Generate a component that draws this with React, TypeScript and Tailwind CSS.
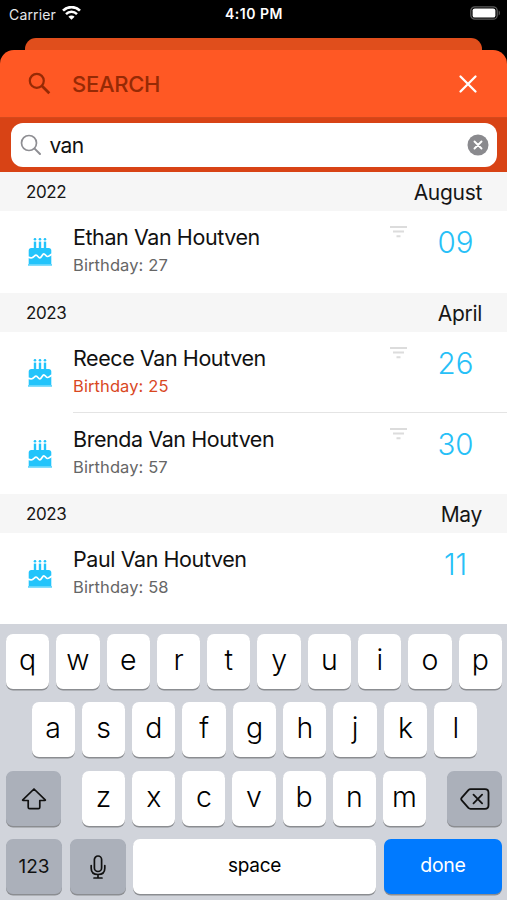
import type { ReactNode } from 'react';

interface Entry {
  name: string;
  age: number;
  day: string;
  highlight?: boolean;
  filter?: boolean;
}

interface Section {
  year: string;
  month: string;
  entries: Entry[];
}

const sections: Section[] = [
  {
    year: '2022',
    month: 'August',
    entries: [{ name: 'Ethan Van Houtven', age: 27, day: '09', filter: true }],
  },
  {
    year: '2023',
    month: 'April',
    entries: [
      {
        name: 'Reece Van Houtven',
        age: 25,
        day: '26',
        highlight: true,
        filter: true,
      },
      { name: 'Brenda Van Houtven', age: 57, day: '30', filter: true },
    ],
  },
  {
    year: '2023',
    month: 'May',
    entries: [{ name: 'Paul Van Houtven', age: 58, day: '11' }],
  },
];

function StatusBar() {
  return (
    <div className="grid grid-cols-3 items-center h-[28px] pl-[9px] pr-[6px] text-white">
      <div className="flex items-center gap-[6px]">
        <span className="text-[14px] tracking-[0.15px] text-gray-200">
          Carrier
        </span>
        <svg className="-mt-[2px]" width="19" height="14" viewBox="0 0 19 14" fill="none">
          <path d="M1 4.6a12.2 12.2 0 0 1 17 0" stroke="white" strokeWidth="2.7" />
          <path d="M4 8.1a7.9 7.9 0 0 1 11 0" stroke="white" strokeWidth="2.5" />
          <path d="M9.5 13.8 6.4 10.7a4.4 4.4 0 0 1 6.2 0z" fill="white" />
        </svg>
      </div>
      <div className="-ml-[2px] -mt-[1px] text-center text-[14px] font-semibold tracking-[0.5px]">
        4:10 PM
      </div>
      <svg
        className="justify-self-end -mt-[2px]"
        width="31"
        height="14"
        viewBox="0 0 31 14"
      >
        <rect x="0.8" y="0.8" width="26.4" height="12.4" rx="4" fill="none" stroke="#5c5c5c" strokeWidth="1.3" />
        <rect x="2.6" y="2.4" width="22.8" height="9.2" rx="2.2" fill="white" />
        <path d="M28.7 4.6c1.6.6 1.6 4.2 0 4.8z" fill="#5c5c5c" />
      </svg>
    </div>
  );
}

function CakeIcon() {
  return (
    <svg width="24" height="30" viewBox="0 0 24 30" fill="#23c4fb">
      {[7, 12, 17].map((x) => (
        <g key={x}>
          <circle cx={x} cy="2.3" r="1.3" />
          <rect x={x - 1.2} y="4.6" width="2.4" height="7" />
        </g>
      ))}
      <path d="M3.2 11h17.6c1.5 0 2.5 1 2.5 2.4V27H.7V13.4C.7 12 1.7 11 3.2 11z" />
      <path
        d="M0 20c1.800.8 3.200 1.200 4.600.4 1.500-.9 2.400-2.400 3.600-2.200 1.400.2 2.200 2.600 3.600 2.600 1.600 0 2.600-4 4-4 1.300 0 2 2.600 3.400 2.700 1.500.1 2.700-1.300 4.800-2.500"
        fill="none"
        stroke="white"
        strokeWidth="1.7"
      />
      <rect x="0" y="27" width="24" height="1.8" opacity="0.7" />
    </svg>
  );
}

function FilterIcon() {
  return (
    <svg width="17" height="13" viewBox="0 0 17 13" stroke="#dcdcdc" strokeWidth="2">
      <path d="M0 2h17M3 6.5h11M6.500 11.200h4" />
    </svg>
  );
}

function SectionHeader(props: { year: string; month: string }) {
  return (
    <div className="flex shrink-0 items-center justify-between h-[39px] pt-[2px] pl-[26px] pr-[25px] bg-[#f6f6f6] text-[#161616]">
      <span className="text-[17px] tracking-[-0.4px]">{props.year}</span>
      <span className="text-[21px] tracking-[-0.3px]">{props.month}</span>
    </div>
  );
}

function Row(props: { entry: Entry; divider: boolean }) {
  const { entry, divider } = props;
  return (
    <div className="flex h-[81px] pl-[28px]">
      <div className="w-[45px] pt-[26px]">
        <CakeIcon />
      </div>
      <div
        className={`flex flex-1 ${divider ? 'border-b border-[#e4e4e4]' : ''}`}
      >
        <div className="flex-1 pt-[12px]">
          <div className="text-[21.5px] leading-[28px] tracking-[-0.42px] text-[#111]">
            {entry.name}
          </div>
          <div
            className={`text-[16.5px] leading-[28px] tracking-[0.1px] ${
              entry.highlight ? 'text-[#d9481f]' : 'text-[#666]'
            }`}
          >
            Birthday: {entry.age}
          </div>
        </div>
        <div className="w-[17px] pt-[14px]">{entry.filter && <FilterIcon />}</div>
        <div className="w-[100px] pl-[7px] pr-[10px] pt-[13px] text-center text-[29.5px] leading-[37px] font-[350] text-[#27c0f7]">
          {entry.day}
        </div>
      </div>
    </div>
  );
}

function Key(props: { children: ReactNode; className?: string }) {
  return (
    <div
      className={`flex items-center justify-center h-[55px] rounded-[7px] shadow-[0_1.5px_0_#8b8d91] ${
        props.className ??
        'flex-1 bg-white text-[28.5px] font-[350] text-black pb-[2px]'
      }`}
    >
      {props.children}
    </div>
  );
}

function Letters(props: { letters: string }) {
  return (
    <>
      {props.letters.split('').map((letter) => (
        <Key key={letter}>{letter}</Key>
      ))}
    </>
  );
}

function Keyboard() {
  return (
    <div className="flex flex-col gap-[13.5px] h-[276px] pt-[9.5px] pl-[6px] pr-[5px] bg-[#d1d4db]">
      <div className="flex gap-[7px]">
        <Letters letters="qwertyuiop" />
      </div>
      <div className="flex gap-[7px] pl-[25.5px] pr-[24.5px]">
        <Letters letters="asdfghjkl" />
      </div>
      <div className="flex justify-between">
        <Key className="w-[55px] bg-[#abb0ba]">
          <svg className="mt-[2px]" width="26" height="24" viewBox="0 0 26 24" fill="none" stroke="#111" strokeWidth="1.7" strokeLinejoin="round">
            <path d="M13 2 1.800 12.800c-.3.400-.2.700.3.700h5.100v6.800c0 .9.500 1.400 1.400 1.400h8.800c.9 0 1.400-.5 1.400-1.400v-6.800h5.100c.5 0 .6-.3.300-.7z" />
          </svg>
        </Key>
        <div className="flex gap-[7px] w-[344px]">
          <Letters letters="zxcvbnm" />
        </div>
        <Key className="w-[55px] bg-[#abb0ba]">
          <svg className="mt-[1px]" width="30" height="22" viewBox="0 0 30 22" fill="none" stroke="#111" strokeWidth="1.8" strokeLinecap="round" strokeLinejoin="round">
            <path d="M10.5 1.2H25c2.200 0 3.500 1.300 3.500 3.500v12.600c0 2.200-1.300 3.500-3.500 3.500H10.500c-.9 0-1.500-.3-2.100-.9L1.800 12.400c-.8-.9-.8-1.900 0-2.800l6.600-7.500c.6-.6 1.200-.9 2.100-.9z" />
            <path d="m13.500 6.700 8.600 8.600m0-8.600-8.600 8.600" />
          </svg>
        </Key>
      </div>
      <div className="flex">
        <Key className="w-[56px] bg-[#abb0ba] text-[19px] text-[#111] pt-[1px]">
          123
        </Key>
        <Key className="w-[56px] ml-[8px] bg-[#abb0ba]">
          <svg width="16" height="24" viewBox="0 0 16 24" fill="none" stroke="#111" strokeWidth="1.7" strokeLinecap="round">
            <rect x="4.4" y="1" width="7.2" height="15.5" rx="3.6" />
            <path d="M1.200 10.500v2.700c0 4 2.700 6.300 6.800 6.300s6.800-2.300 6.800-6.300v-2.700M8 19.500V23M4 23h8" />
          </svg>
        </Key>
        <Key className="w-[243px] ml-[7px] bg-white text-[19px] tracking-[-0.3px] text-black pb-[1px]">
          space
        </Key>
        <Key className="flex-1 ml-[8px] bg-[#007aff] text-[19.5px] tracking-[-0.3px] text-white pb-[1px]">
          done
        </Key>
      </div>
    </div>
  );
}

function App() {
  return (
    <div className="flex flex-col w-[507px] h-[900px] overflow-hidden bg-black font-['Inter',sans-serif]">
      <StatusBar />
      <div className="h-[12px] mt-[10px] mx-[25px] rounded-t-[11px] bg-[#e04e1c]" />
      <div className="bg-[linear-gradient(to_right,#000_25px,#e04e1c_25px,#e04e1c_482px,#000_482px)]">
        <div className="flex items-center h-[68px] pl-[28px] pr-[29px] rounded-t-[14px] bg-[#ff5824] border-b border-[#d44a1d]">
          <svg width="23" height="23" viewBox="0 0 23 23" fill="none" stroke="#962a05" strokeWidth="2.2">
            <circle cx="8.8" cy="8.8" r="7" />
            <path d="m13.800 13.800 7.500 7.500" strokeWidth="2.7" />
          </svg>
          <div className="flex-1 ml-[21px] pt-[1px] text-[22px] font-medium tracking-[-0.3px] text-[#962a05]">
            SEARCH
          </div>
          <svg width="20" height="20" viewBox="0 0 20 20" stroke="white" strokeWidth="2.3" strokeLinecap="round">
            <path d="m2.500 2.500 15 15m0-15-15 15" />
          </svg>
        </div>
      </div>
      <div className="h-[54px] pt-[5px] px-[10.5px] bg-[#d84315]">
        <div className="flex items-center h-[44px] pl-[9px] pr-[8px] rounded-[12px] bg-white">
          <svg width="22" height="22" viewBox="0 0 22 22" fill="none" stroke="#8e8e93" strokeWidth="1.7" strokeLinecap="round">
            <circle cx="9" cy="9" r="7.5" />
            <path d="m14.600 14.600 5.400 5.400" strokeWidth="2" />
          </svg>
          <div className="flex-1 ml-[8px] pt-[2px] text-[21px] tracking-[-0.6px] text-[#111]">
            van
          </div>
          <svg width="22" height="22" viewBox="0 0 22 22">
            <circle cx="11" cy="11" r="10.5" fill="#8a8a8e" />
            <path d="m7.500 7.500 7 7m0-7-7 7" stroke="white" strokeWidth="1.9" strokeLinecap="round" />
          </svg>
        </div>
      </div>
      <div className="flex flex-col flex-1 bg-white">
        {sections.map((section, index) => (
          <div key={index} className={index === 0 ? 'pb-[1px]' : ''}>
            <SectionHeader year={section.year} month={section.month} />
            {section.entries.map((entry, i) => (
              <Row
                key={entry.name}
                entry={entry}
                divider={i < section.entries.length - 1}
              />
            ))}
          </div>
        ))}
      </div>
      <Keyboard />
    </div>
  );
}
export default App;
